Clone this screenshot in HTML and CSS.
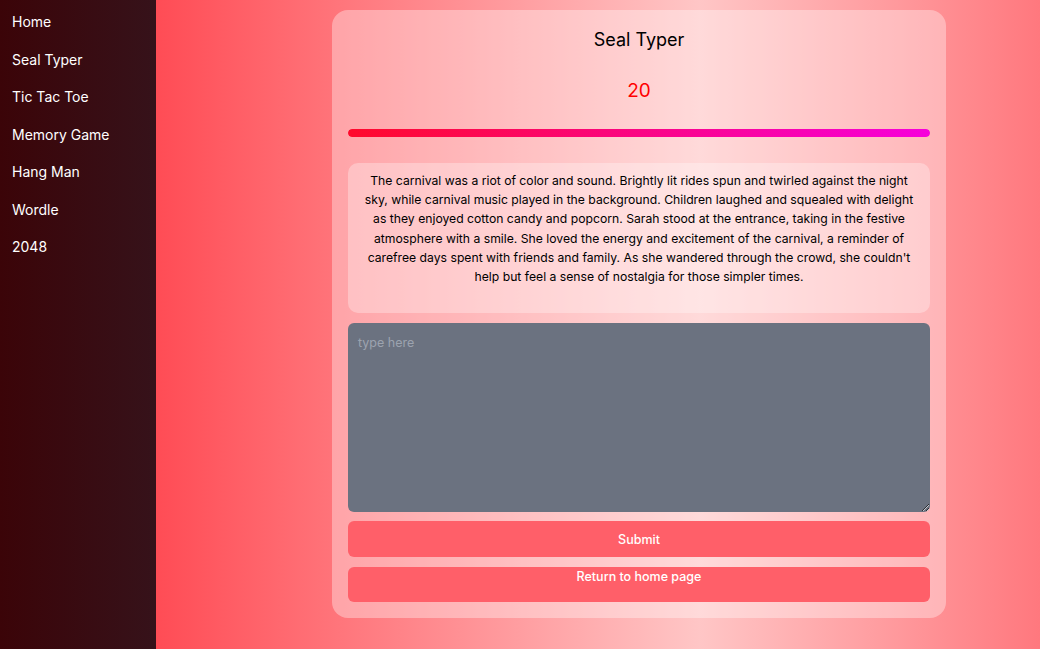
FILE: index.html
```html
<!DOCTYPE html>
<html lang="en">
<head>
<meta charset="utf-8">
<title>Seal Typer</title>
<link rel="stylesheet" href="styles.css">
</head>
<body>
<div class="app">
  <nav class="sidebar">
    <a class="nav-link" href="#">Home</a>
    <a class="nav-link" href="#">Seal Typer</a>
    <a class="nav-link" href="#">Tic Tac Toe</a>
    <a class="nav-link" href="#">Memory Game</a>
    <a class="nav-link" href="#">Hang Man</a>
    <a class="nav-link" href="#">Wordle</a>
    <a class="nav-link" href="#">2048</a>
  </nav>
  <main class="main">
    <section class="card">
      <h1 class="title">Seal Typer</h1>
      <div class="timer">20</div>
      <div class="progress"><div class="progress-fill" style="width:100%"></div></div>
      <div class="passage">
        <p>The carnival was a riot of color and sound. Brightly lit rides spun and twirled against the night sky, while carnival music played in the background. Children laughed and squealed with delight as they enjoyed cotton candy and popcorn. Sarah stood at the entrance, taking in the festive atmosphere with a smile. She loved the energy and excitement of the carnival, a reminder of carefree days spent with friends and family. As she wandered through the crowd, she couldn't help but feel a sense of nostalgia for those simpler times.</p>
      </div>
      <textarea class="input" placeholder="type here"></textarea>
      <button class="btn">Submit</button>
      <a class="btn btn-top" href="#">Return to home page</a>
    </section>
  </main>
</div>
</body>
</html>
```
FILE: styles.css
```css
* { box-sizing: border-box; }
html, body { margin: 0; padding: 0; height: 100%; }
body {
  font-family: Inter, "Liberation Sans", sans-serif;
  background: #ff787e;
}
.app { display: flex; min-height: 649px; }
.sidebar {
  width: 156px;
  flex-shrink: 0;
  background: linear-gradient(to right, #3b0408, #36121a);
  display: flex;
  flex-direction: column;
  padding: 12px 12px;
  gap: 18.5px;
}
.nav-link {
  color: #fff;
  text-decoration: none;
  font-size: 14px;
  line-height: 19px;
}
.main {
  flex: 1;
  display: flex;
  justify-content: center;
  align-items: flex-start;
  padding: 10px 0 0 82px;
  background: linear-gradient(to right, #ff4c55 0%, #ffc6c6 61.5%, #ff787e 100%);
}
.card {
  width: 614px;
  background: rgba(255, 255, 255, 0.35);
  border-radius: 16px;
  padding: 17px 16px 16px;
  display: flex;
  flex-direction: column;
}
.title {
  margin: 0;
  text-align: center;
  font-size: 18px;
  font-weight: 400;
  line-height: 26px;
  color: #000;
}
.timer {
  margin-top: 25px;
  text-align: center;
  font-size: 19px;
  line-height: 26px;
  color: #ff0000;
}
.progress {
  margin-top: 25px;
  height: 8px;
  border-radius: 9999px;
  overflow: hidden;
}
.progress-fill {
  height: 100%;
  border-radius: 9999px;
  background: linear-gradient(to right, #ff0a2c, #f600dc);
}
.passage {
  margin-top: 26px;
  background: rgba(255, 255, 255, 0.3);
  border-radius: 10px;
  height: 150px;
  padding: 8px 14px;
}
.passage p {
  margin: 0;
  text-align: center;
  font-size: 12.2px;
  line-height: 19.2px;
  color: #000;
}
.input {
  margin-top: 10px;
  height: 189px;
  width: 100%;
  background: #6b7280;
  border: none;
  border-radius: 6px;
  padding: 12px 10px;
  font-family: inherit;
  font-size: 12.5px;
  color: #fff;
  resize: vertical;
}
.input::placeholder { color: #9ca3af; }
.btn {
  margin-top: 9px;
  height: 36px;
  width: 100%;
  display: flex;
  align-items: center;
  justify-content: center;
  background: #ff5f69;
  color: #fff;
  border: none;
  border-radius: 6px;
  font-family: inherit;
  font-size: 12.5px;
  font-weight: 500;
  text-decoration: none;
}
.btn-top {
  margin-top: 10px;
  height: 35px;
  align-items: flex-start;
  padding-top: 2px;
}
```
